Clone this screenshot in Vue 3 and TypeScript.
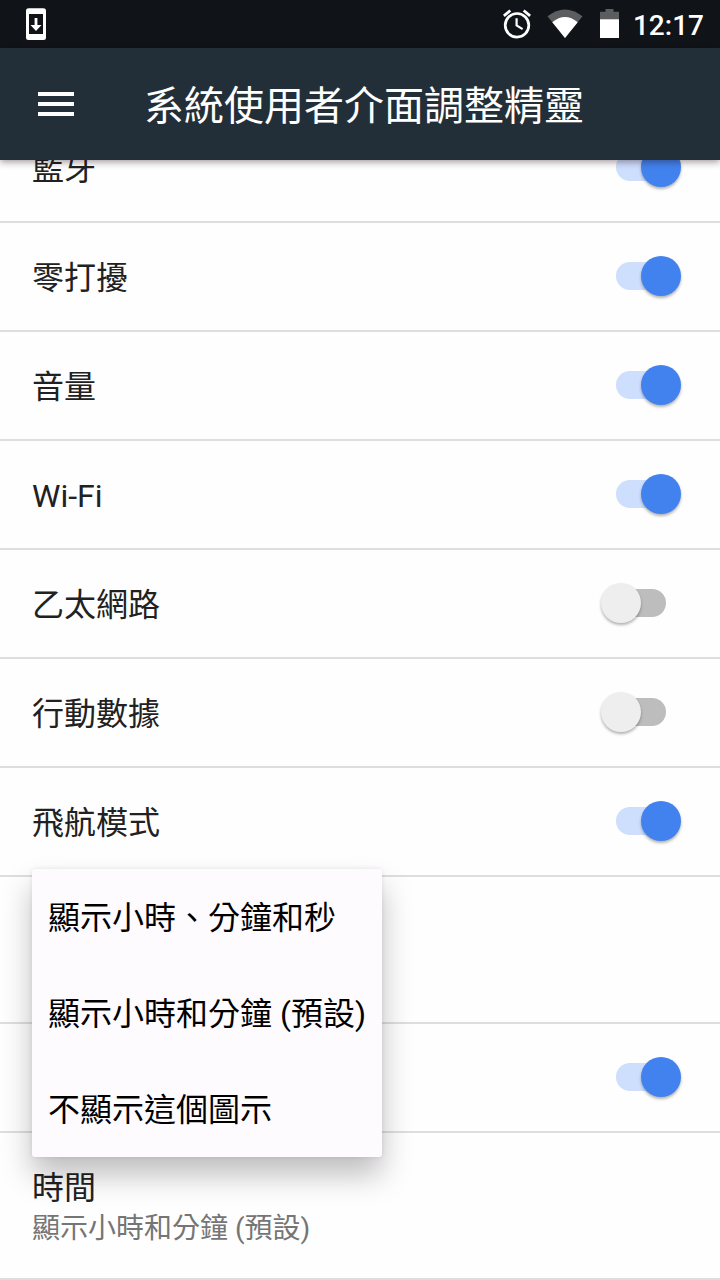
<script setup lang="ts">
interface Row {
  title: string
  summary?: string
  tall?: boolean
  on?: boolean
}

const rows: Row[] = [
  { title: '藍牙', on: true },
  { title: '零打擾', on: true },
  { title: '音量', on: true },
  { title: 'Wi-Fi', on: true },
  { title: '乙太網路', on: false },
  { title: '行動數據', on: false },
  { title: '飛航模式', on: true },
  { title: '', tall: true },
  { title: '', on: true },
  { title: '時間', summary: '顯示小時和分鐘 (預設)', tall: true },
]

const options: string[] = ['顯示小時、分鐘和秒', '顯示小時和分鐘 (預設)', '不顯示這個圖示']
</script>

<template>
  <div class="screen" lang="zh-Hant">
    <header class="status">
      <svg class="update" width="48" height="48" viewBox="0 0 48 48">
        <path fill="#fff" fill-rule="evenodd" d="M16.500 8.300h15q2.500 0 2.500 2.500v26.700q0 2.500-2.500 2.500h-15q-2.500 0-2.500-2.500V10.800q0-2.500 2.500-2.500zM17 14v20h14V14z" />
        <path fill="#fff" d="M22.600 18h2.800v7h4.100L24 31l-5.500-6h4.100z" />
      </svg>
      <div class="indicators">
        <svg class="alarm" width="30" height="32" viewBox="0 0 30 32" fill="none" stroke="#fff">
          <circle cx="15" cy="17.300" r="11.800" stroke-width="2.700" />
          <path d="M14.600 10.200v7.300l6 3.600" stroke-width="2.200" />
          <path d="M1.900 7.900 8.300 2.500M28.100 7.900 21.700 2.500" stroke-width="2.800" />
        </svg>
        <svg class="wifi" width="36" height="30" viewBox="0 0 36 30">
          <path fill="#5b5d5f" d="M.5 7.300Q18-6.200 35.500 7.300L18 29z" />
          <path fill="#fff" d="M5.300 13.200Q18 2.700 30.700 13.200L18 29z" />
        </svg>
        <svg class="battery" width="19" height="29" viewBox="0 0 19 29">
          <path fill="#5b5d5f" d="M5.500 0h8v2.700H19V11H0V2.700h5.500z" />
          <path fill="#fff" d="M0 10.300h19V29H0z" />
        </svg>
        <span class="clock">12:17</span>
      </div>
    </header>

    <div class="toolbar">
      <svg class="menu" width="36" height="24" viewBox="0 0 36 24">
        <path fill="#fff" d="M0 0h36v4H0zM0 10h36v4H0zM0 20h36v4H0z" />
      </svg>
      <h1>系統使用者介面調整精靈</h1>
    </div>

    <main class="viewport">
      <ul class="list">
        <li v-for="(row, i) in rows" :key="i" class="row" :class="{ tall: row.tall }">
          <div class="labels">
            <span class="title">{{ row.title }}</span>
            <span v-if="row.summary" class="summary">{{ row.summary }}</span>
          </div>
          <span v-if="row.on !== undefined" class="switch" :class="{ on: row.on }">
            <span class="track"></span>
            <span class="thumb"></span>
          </span>
        </li>
      </ul>
    </main>

    <div class="popup">
      <div v-for="option in options" :key="option" class="option">{{ option }}</div>
    </div>
  </div>
</template>

<style>
body {
  margin: 0;
  background: #fefefe;
}
</style>

<style scoped>
.screen {
  position: relative;
  display: flex;
  flex-direction: column;
  width: 720px;
  height: 1280px;
  overflow: hidden;
  background: #fefefe;
  font-family: Roboto, 'Noto Sans CJK TC', sans-serif;
}

.status {
  display: flex;
  justify-content: space-between;
  flex: none;
  height: 48px;
  background: #101418;
}

.update {
  margin-left: 12px;
}

.indicators {
  display: flex;
  align-items: flex-start;
  padding-right: 16px;
}

.alarm {
  margin: 8px 15px 0 0;
}

.wifi {
  margin: 9px 17px 0 0;
}

.battery {
  margin: 9px 14px 0 0;
}

.clock {
  color: #fff;
  font-size: 28px;
  font-weight: 500;
  line-height: 52px;
}

.toolbar {
  position: relative;
  z-index: 1;
  display: flex;
  align-items: center;
  flex: none;
  height: 112px;
  background: #232f38;
  box-shadow: 0 2px 7px rgba(30, 10, 20, 0.42);
}

.menu {
  margin: 0 70px 0 38px;
}

h1 {
  margin: 0;
  padding-top: 6px;
  color: #fff;
  font-size: 40px;
  font-weight: 400;
  line-height: 56px;
}

.viewport {
  flex: 1;
  min-height: 0;
}

.list {
  margin: -46px 0 0;
  padding: 0;
  list-style: none;
}

.row {
  display: flex;
  align-items: center;
  justify-content: space-between;
  box-sizing: border-box;
  height: 109px;
  padding: 0 39px 0 32px;
  border-bottom: 2px solid #dedede;
}

.row.tall {
  height: 147px;
}

.labels {
  display: flex;
  flex-direction: column;
  padding-top: 2px;
}

.title {
  color: #212121;
  font-size: 32px;
  line-height: 42px;
}

.summary {
  color: #757575;
  font-size: 28px;
  line-height: 40px;
}

.row.tall .labels {
  padding-top: 4px;
}

.switch {
  display: grid;
  align-items: center;
  width: 81px;
  height: 40px;
  padding-bottom: 1px;
}

.track,
.thumb {
  grid-area: 1 / 1;
}

.track {
  width: 50px;
  height: 28px;
  margin-left: 16px;
  border-radius: 14px;
  background: #bdbdbd;
}

.thumb {
  width: 40px;
  height: 40px;
  margin-left: 1px;
  border-radius: 50%;
  background: #eee;
  box-shadow: 0 2px 3px rgba(0, 0, 0, 0.3);
}

.on .track {
  background: #cedefd;
}

.on .thumb {
  margin-left: 41px;
  background: #4182ee;
}

.popup {
  position: absolute;
  z-index: 2;
  top: 869px;
  left: 32px;
  width: 350px;
  border-radius: 3px;
  background: #fefbff;
  box-shadow: 0 18px 30px rgba(0, 0, 0, 0.25), 0 0 5px rgba(0, 0, 0, 0.09);
}

.option {
  box-sizing: border-box;
  height: 96px;
  padding: 1px 0 0 16px;
  color: #000;
  font-size: 32px;
  line-height: 96px;
  white-space: nowrap;
}
</style>
